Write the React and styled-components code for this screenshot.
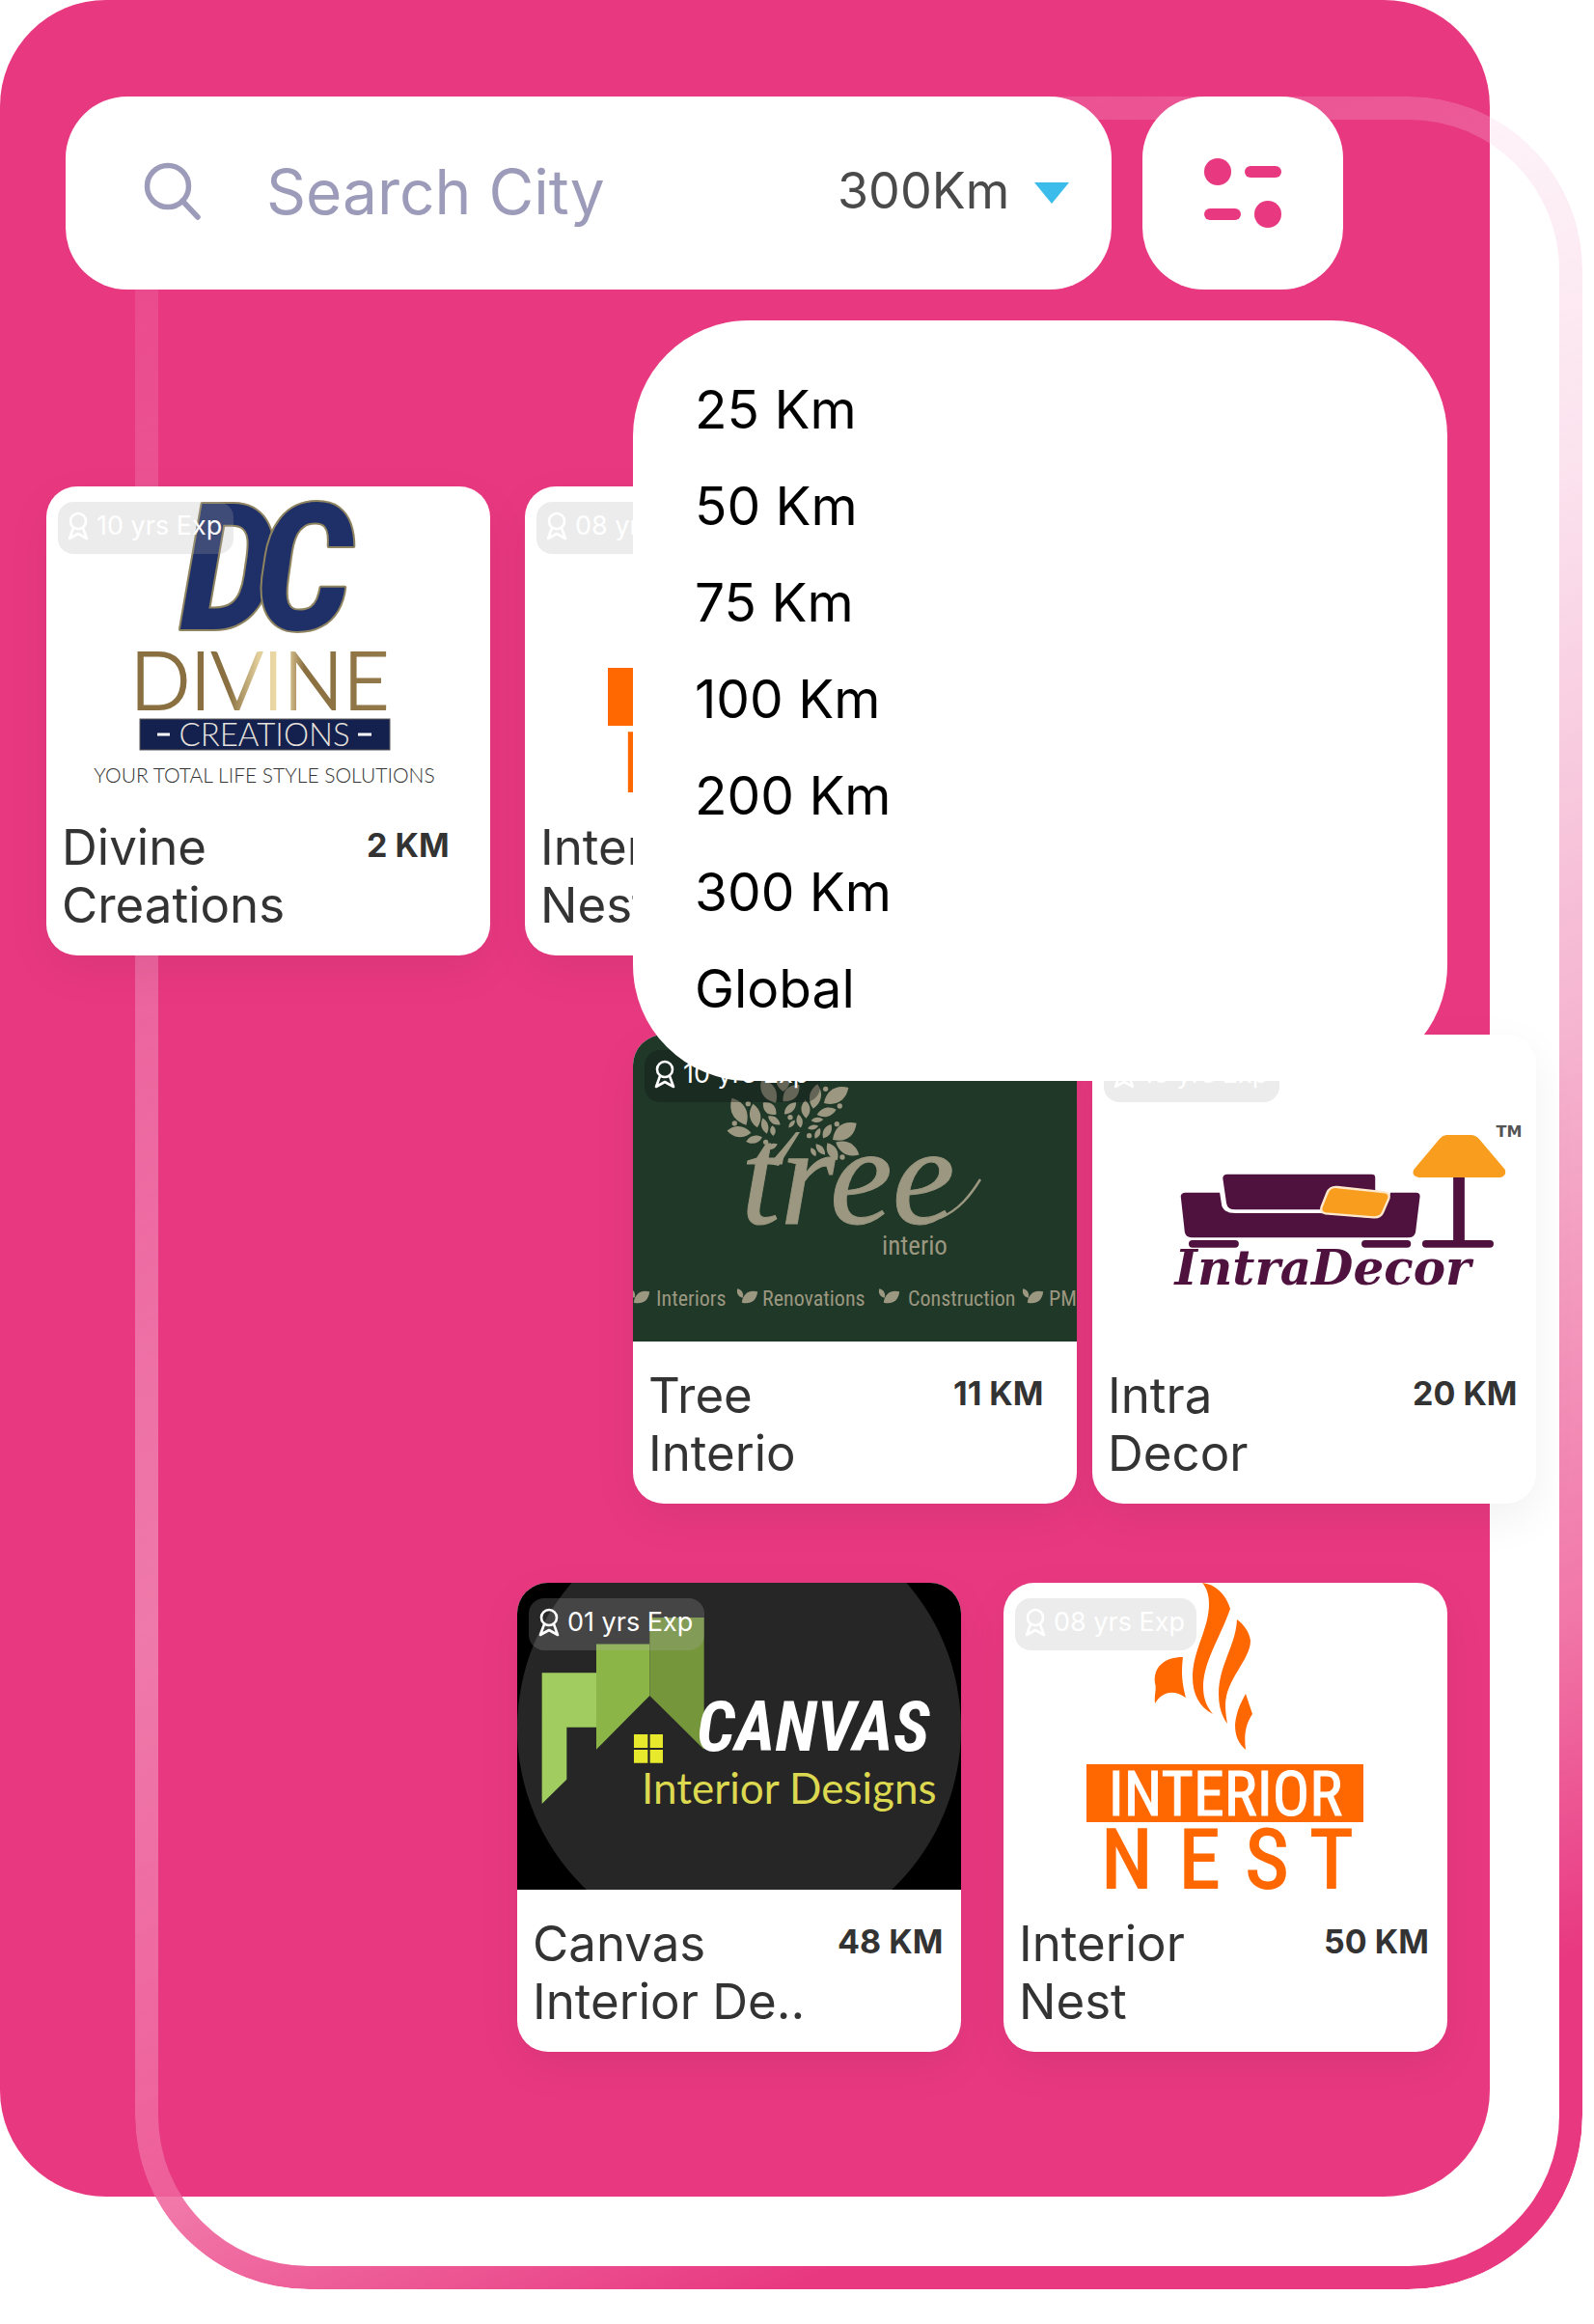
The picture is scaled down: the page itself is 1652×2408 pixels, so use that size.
import React, { useState } from "react";
import styled, { createGlobalStyle } from "styled-components";

const pink = "#e83880";
const uiFont = `Inter, Roboto, "Liberation Sans", sans-serif`;
const narrow = `"Liberation Sans Narrow", "Roboto Condensed", "DejaVu Sans Condensed", sans-serif`;

const GlobalStyle = createGlobalStyle`
  *, *::before, *::after { box-sizing: border-box; }
  body { margin: 0; background: #fff; font-family: ${uiFont}; }
  button, input, select { font-family: inherit; border: 0; background: none; }
  ul { margin: 0; padding: 0; list-style: none; }
`;

const Page = styled.div`
  padding: 0 108px 132px 0;
  overflow: hidden;
`;

const Panel = styled.main`
  position: relative;
  padding: 100px 0 150px;
  border-radius: 110px;
  background: ${pink};
`;

const Ring = styled.div`
  position: absolute;
  inset: 100px -96px -96px 140px;
  padding: 24px;
  border-radius: 180px;
  background: linear-gradient(
    157deg,
    rgba(255, 255, 255, 0.06) 0%,
    rgba(250, 205, 228, 0.22) 20%,
    rgba(245, 180, 210, 0.38) 35%,
    rgba(241, 149, 188, 0.7) 55%,
    rgba(239, 100, 156, 0.88) 76%,
    ${pink} 88%
  );
  mask: linear-gradient(#000 0 0) content-box exclude, linear-gradient(#000 0 0);
  pointer-events: none;
`;

const Content = styled.div`
  position: relative;
`;

const SearchRow = styled.form`
  display: flex;
  gap: 32px;
  height: 200px;
  padding: 0 152px 0 68px;
`;

const SearchBox = styled.div`
  flex: 1;
  display: flex;
  align-items: center;
  min-width: 0;
  padding: 0 44px 0 80px;
  border-radius: 64px;
  background: #fff;
`;

const SearchInput = styled.input`
  flex: 1;
  min-width: 0;
  height: 120px;
  margin-left: 64px;
  padding: 0 0 4px;
  color: #4a4a4a;
  font-size: 64px;
  outline: none;
  &::placeholder { color: #9c9cba; opacity: 1; }
`;

const DistanceSelect = styled.select`
  appearance: none;
  width: 180px;
  margin-right: 24px;
  padding: 0 0 4px;
  color: #4a4a4a;
  font-size: 52px;
  line-height: 64px;
  outline: none;
`;

const FilterButton = styled.button`
  display: grid;
  place-items: center;
  width: 208px;
  padding: 0;
  border-radius: 64px;
  background: #fff;
`;

const Menu = styled.ul`
  position: absolute;
  z-index: 2;
  top: 232px;
  right: 44px;
  width: 844px;
  padding: 42px 64px 46px;
  border-radius: 120px;
  background: #fff;
`;

const MenuItem = styled.button`
  display: block;
  width: 100%;
  height: 100px;
  padding: 0;
  color: #000;
  font-size: 55px;
  text-align: left;
`;

const Results = styled.div`
  display: flex;
  flex-direction: column;
  gap: 82px;
  margin-top: 204px;
`;

const ResultRow = styled.div`
  display: flex;
  justify-content: ${(p) => p.$align};
  gap: ${(p) => p.$gap}px;
  margin: 0 ${(p) => p.$right}px 0 48px;
`;

const CardBox = styled.article`
  position: relative;
  width: 460px;
  height: 486px;
  overflow: hidden;
  border-radius: 32px;
  background: #fff;
`;

const CardShadow = styled.div`
  flex: none;
  border-radius: 32px;
  box-shadow: 0 16px 48px rgba(0, 0, 0, 0.06);
`;

const Artwork = styled.svg`
  display: block;
  width: 460px;
  height: 318px;
`;

const Badge = styled.div`
  position: absolute;
  top: 16px;
  left: 12px;
  display: flex;
  align-items: center;
  gap: 6px;
  height: 54px;
  padding: 0 12px 4px 8px;
  border-radius: 16px;
  background: ${(p) => (p.$dark ? "rgba(17, 26, 26, 0.4)" : "rgba(171, 171, 171, 0.23)")};
  color: #fff;
  font-size: 27px;
  line-height: 32px;
  white-space: nowrap;
`;

const CardInfo = styled.div`
  display: grid;
  grid-template-columns: 1fr 112px;
  padding: 26px 16px 0 16px;
  color: #333;
`;

const CardName = styled.h2`
  margin: 0;
  font-size: 51px;
  font-weight: 400;
  line-height: 60px;
  white-space: pre;
`;

const Distance = styled.span`
  padding-top: 4px;
  font-size: 34px;
  font-weight: 700;
  line-height: 48px;
  white-space: nowrap;
`;

const SearchIcon = () => (
  <svg width="64" height="64" viewBox="0 0 64 64" fill="none" stroke="#9c9cba" strokeWidth="5.5" strokeLinecap="round" aria-hidden="true">
    <circle cx="26" cy="25" r="21.5" />
    <path d="M41 40 L57 57" />
  </svg>
);

const CaretIcon = () => (
  <svg width="36" height="22" viewBox="0 0 36 22" fill="#3cbcea" aria-hidden="true">
    <path d="M0 0 H36 L18 22Z" />
  </svg>
);

const FilterIcon = () => (
  <svg width="80" height="72" viewBox="0 0 80 72" fill={pink} aria-hidden="true">
    <circle cx="14" cy="14" r="14" />
    <rect x="42" y="8" width="38" height="12" rx="6" />
    <rect x="0" y="52" width="38" height="12" rx="6" />
    <circle cx="66" cy="58" r="14" />
  </svg>
);

const RibbonIcon = () => (
  <svg width="26" height="30" viewBox="0 0 26 30" fill="none" stroke="#fff" strokeWidth="2.6" strokeLinejoin="round" aria-hidden="true">
    <circle cx="13" cy="10" r="8" />
    <path d="M8 17 L4 28 L13 23 L22 28 L18 17" />
  </svg>
);

const DivineArt = () => (
  <Artwork viewBox="0 0 460 318" role="img" aria-label="Divine Creations logo">
    <defs>
      <linearGradient id="gold" x1="95" x2="356" y1="0" y2="0" gradientUnits="userSpaceOnUse">
        <stop offset="0" stopColor="#8a7040" />
        <stop offset="0.36" stopColor="#8a7040" />
        <stop offset="0.48" stopColor="#e2cf9c" />
        <stop offset="0.58" stopColor="#f0dca8" />
        <stop offset="0.66" stopColor="#8a7040" />
        <stop offset="1" stopColor="#94794a" />
      </linearGradient>
    </defs>
    <g fontFamily={narrow} fontWeight="700" fontStyle="italic" fontSize="184" fill="#1f2f68" stroke="#8f8460" strokeWidth="4" strokeLinejoin="round" paintOrder="stroke">
      <text x="138" y="148">D</text>
      <text x="216" y="148">C</text>
    </g>
    <g fontFamily="Lato, sans-serif" fontWeight="300">
      <text x="87" y="231" fontSize="82" fill="url(#gold)" stroke="url(#gold)" strokeWidth="2">DIVINE</text>
      <rect x="97" y="241" width="259" height="32" fill="#14214f" stroke="#5c5a58" strokeWidth="1" />
      <path d="M115 257 H128 M323 257 H337" stroke="#fff" strokeWidth="3" />
      <text x="226" y="269" fontSize="33" fill="#e6e1dc" textAnchor="middle">CREATIONS</text>
      <text x="226" y="307" fontSize="21" fill="#333" textAnchor="middle">YOUR TOTAL LIFE STYLE SOLUTIONS</text>
    </g>
  </Artwork>
);

const NestArt = () => (
  <Artwork viewBox="0 0 460 318" role="img" aria-label="Interior Nest logo">
    <g fill="#ff6800">
      <path d="M206 0 C222 2 231 14 235 27 C224 58 207 82 207 108 C207 120 211 129 217 136 C203 129 196 115 196 98 C196 70 213 48 213 22 C213 13 211 6 206 0Z" />
      <path d="M242 38 C250 44 255 52 256 60 C256 80 230 100 230 127 C230 134 231 140 232 146 C226 138 223 128 223 115 C223 85 241 65 242 38Z" />
      <path d="M251 115 L258 136 C251 146 249 158 251 173 C243 166 240 158 240 147 C241 134 246 124 251 115Z" />
      <path d="M186 77 C184 92 185 105 189 119 C176 110 164 113 157 125 C156 116 159 110 157 104 C155 87 167 77 186 77Z" />
      <rect x="86" y="188" width="287" height="60" />
      <g fontFamily={narrow} fontSize="86" stroke="#ff6800" strokeWidth="2" textAnchor="middle">
        <text x="128" y="316">N</text>
        <text x="203" y="316">E</text>
        <text x="273" y="316">S</text>
        <text x="340" y="316">T</text>
      </g>
    </g>
    <text x="230" y="241" fontFamily={narrow} fontSize="64" fill="#fff" stroke="#fff" strokeWidth="1" textAnchor="middle">INTERIOR</text>
  </Artwork>
);

const leaves = [
  [378, 275, 95, 42, 62], [428, 288, 75, 32, 80], [473, 266, 55, 30, 42], [487, 303, 46, 20, 35],
  [458, 320, 50, 20, 75], [483, 335, 32, 16, 85], [378, 338, 75, 32, 5], [425, 362, 52, 22, -15],
  [480, 384, 38, 16, -25], [470, 212, 84, 40, 58], [515, 180, 66, 40, 90], [540, 218, 72, 36, -45],
  [537, 265, 52, 22, -45], [542, 314, 30, 12, -50], [566, 305, 42, 18, 80], [585, 268, 56, 26, 87],
  [615, 228, 78, 34, -80], [680, 225, 90, 42, -32], [650, 277, 62, 26, -15], [621, 301, 38, 15, -5],
  [608, 324, 34, 14, -12], [622, 343, 36, 15, -65], [652, 337, 50, 22, -60], [706, 337, 90, 44, -35],
  [715, 390, 82, 36, 28], [668, 400, 62, 28, 60], [631, 393, 44, 18, 50], [609, 401, 30, 14, 60],
];
const berries = [[406, 251], [364, 312], [461, 370], [537, 293], [596, 350], [647, 205], [691, 258], [682, 314], [699, 417]];

const Leaf = ({ x, y, l, w, a }) => (
  <path
    d={`M${-l / 2} 0 C${-l / 5} ${-w * 0.7} ${l / 5} ${-w * 0.7} ${l / 2} 0 C${l / 5} ${w * 0.7} ${-l / 5} ${w * 0.7} ${-l / 2} 0Z`}
    transform={`translate(${x} ${y}) rotate(${a})`}
  />
);

const services = [
  { x: 24, leaf: 9, name: "Interiors" },
  { x: 134, leaf: 121, name: "Renovations" },
  { x: 285, leaf: 268, name: "Construction" },
  { x: 431, leaf: 417, name: "PMC" },
];

const TreeArt = () => (
  <Artwork viewBox="0 0 460 318" role="img" aria-label="Tree Interio logo">
    <rect width="460" height="318" fill="#203828" />
    <g fill="#9b9780">
      <g transform="translate(-16 -12) scale(0.3333)">
        {leaves.map(([x, y, l, w, a]) => <Leaf key={`${x}-${y}`} x={x} y={y} l={l} w={w} a={a} />)}
        {berries.map(([x, y]) => <circle key={`${x}-${y}`} cx={x} cy={y} r="8" />)}
      </g>
      <text x="112" y="196" fontFamily='"Liberation Serif", serif' fontStyle="italic" fontSize="146" stroke="#9b9780" strokeWidth="1">tree</text>
      <path d="M151 136 Q160 122 173 101 L169 101 Q154 120 141 134Z" />
      <path d="M318 190 C338 182 350 166 360 150" fill="none" stroke="#9b9780" strokeWidth="2.5" />
      <text x="258" y="228" fontFamily={narrow} fontSize="27">interio</text>
      {services.map(({ x, leaf, name }) => (
        <g key={name}>
          <text x={x} y="281" fontFamily={narrow} fontSize="22">{name}</text>
          <Leaf x={leaf} y={272} l={20} w={10} a={-35} />
          <Leaf x={leaf - 10} y={268} l={11} w={5} a={60} />
        </g>
      ))}
    </g>
  </Artwork>
);

const IntraArt = () => (
  <Artwork viewBox="0 0 460 318" role="img" aria-label="Intra Decor logo">
    <g transform="translate(-21 -12) scale(0.3457 0.3333)" fill="#4f123f">
      <path d="M452 482 Q453 470 466 470 H898 Q910 470 909 482 V580 H490 Q466 580 463 560Z" />
      <path d="M326 538 Q328 527 340 527 H443 L449 568 Q456 591 490 591 H745 L900 606 Q925 606 935 585 L955 527 H1032 Q1044 527 1043 540 L1030 650 Q1026 667 1008 667 H358 Q341 665 338 650Z" />
      <path d="M795 510 L940 526 Q954 530 950 545 L932 588 Q925 605 905 604 L760 592 Q743 588 748 572 L765 528 Q773 508 795 510Z" fill="#f99d1e" stroke="#ffe9cc" strokeWidth="7" />
      <rect x="350" y="675" width="150" height="23" rx="11" />
      <rect x="868" y="675" width="148" height="23" rx="11" />
      <rect x="1050" y="675" width="214" height="23" rx="11" />
      <rect x="1143" y="478" width="34" height="204" />
      <path d="M1122 348 H1198 Q1212 350 1222 362 L1298 455 Q1304 475 1284 480 H1040 Q1016 476 1025 455 L1102 360 Q1110 350 1122 348Z" fill="#f99d1e" />
    </g>
    <text x="239" y="259" fontFamily='"DejaVu Serif", serif' fontWeight="700" fontStyle="italic" fontSize="50" fill="#4f123f" textAnchor="middle">IntraDecor</text>
    <text x="432" y="106" fontFamily='"DejaVu Sans", sans-serif' fontWeight="700" fontSize="16" fill="#555" textAnchor="middle">TM</text>
  </Artwork>
);

const CanvasArt = () => (
  <Artwork viewBox="0 0 460 318" role="img" aria-label="Canvas Interior Designs logo">
    <rect width="460" height="318" fill="#000" />
    <circle cx="230" cy="151" r="230" fill="#262626" />
    <g transform="translate(-15 -20) scale(0.3333 0.338)">
      <path d="M122 335 H291 V502 H199 V662 L122 737Z" fill="#a0cc60" />
      <path d="M291 247 H457 V405 L291 570Z" fill="#8cb548" />
      <path d="M457 166 H626 V570 L457 405Z" fill="#76963c" />
      <path d="M408 524 H451 V565 H408Z M458 524 H498 V565 H458Z M408 571 H451 V612 H408Z M458 571 H498 V612 H458Z" fill="#e8e82c" />
    </g>
    <text x="186" y="174" fontFamily={narrow} fontWeight="700" fontStyle="italic" fontSize="72" fill="#fff">CANVAS</text>
    <text x="129" y="229" fontFamily="Lato, sans-serif" fontSize="44" fill="#dcd850">Interior Designs</text>
  </Artwork>
);

const rows = [
  {
    id: "first", align: "flex-start", gap: 36, right: 0,
    cards: [
      { id: "divine", Art: DivineArt, exp: "10 yrs Exp", name: "Divine\nCreations", km: "2 KM" },
      { id: "nest-near", Art: NestArt, exp: "08 yrs Exp", name: "Interior\nNest", km: "" },
    ],
  },
  {
    id: "second", align: "flex-end", gap: 16, right: -48,
    cards: [
      { id: "tree", Art: TreeArt, exp: "10 yrs Exp", name: "Tree\nInterio", km: "11 KM", dark: true },
      { id: "intra", Art: IntraArt, exp: "10 yrs Exp", name: "Intra\nDecor", km: "20 KM" },
    ],
  },
  {
    id: "third", align: "flex-end", gap: 44, right: 44,
    cards: [
      { id: "canvas", Art: CanvasArt, exp: "01 yrs Exp", name: "Canvas\nInterior De..", km: "48 KM" },
      { id: "nest-far", Art: NestArt, exp: "08 yrs Exp", name: "Interior\nNest", km: "50 KM" },
    ],
  },
];

const Card = ({ Art, exp, name, km, dark }) => (
  <CardShadow>
    <CardBox>
      <Art />
      <Badge $dark={dark}><RibbonIcon />{exp}</Badge>
      <CardInfo>
        <CardName>{name}</CardName>
        <Distance>{km}</Distance>
      </CardInfo>
    </CardBox>
  </CardShadow>
);

const distances = ["25 Km", "50 Km", "75 Km", "100 Km", "200 Km", "300 Km", "Global"];

export default function App() {
  const [distance, setDistance] = useState("300 Km");
  return (
    <Page>
      <GlobalStyle />
      <Panel>
        <Ring />
        <Content>
          <SearchRow role="search" onSubmit={(e) => e.preventDefault()}>
            <SearchBox>
              <SearchIcon />
              <SearchInput type="text" placeholder="Search City" aria-label="Search City" />
              <DistanceSelect aria-label="Distance" value={distance} onChange={(e) => setDistance(e.target.value)}>
                {distances.map((d) => <option key={d} value={d}>{d.replace(" ", "")}</option>)}
              </DistanceSelect>
              <CaretIcon />
            </SearchBox>
            <FilterButton type="button" aria-label="Filters"><FilterIcon /></FilterButton>
          </SearchRow>
          <Menu>
            {distances.map((d) => (
              <li key={d}>
                <MenuItem type="button" onClick={() => setDistance(d)}>{d}</MenuItem>
              </li>
            ))}
          </Menu>
          <Results>
            {rows.map((row) => (
              <ResultRow key={row.id} $align={row.align} $gap={row.gap} $right={row.right}>
                {row.cards.map(({ id, ...card }) => <Card key={id} {...card} />)}
              </ResultRow>
            ))}
          </Results>
        </Content>
      </Panel>
    </Page>
  );
}
